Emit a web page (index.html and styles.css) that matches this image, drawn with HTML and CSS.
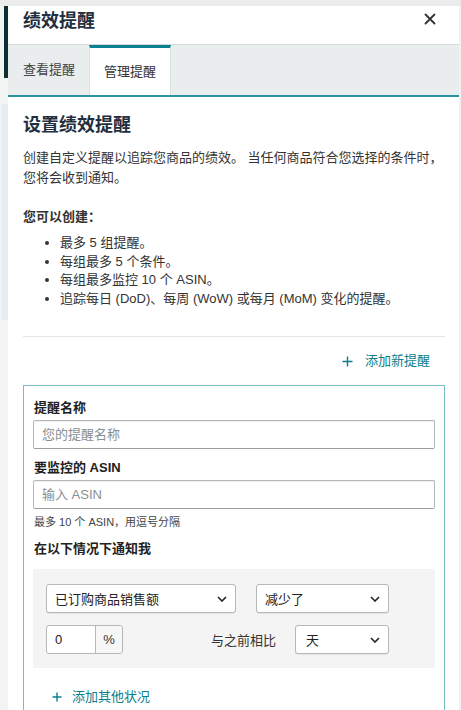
FILE: index.html
```html
<!DOCTYPE html>
<html lang="zh-CN">
<head>
<meta charset="utf-8">
<title>绩效提醒</title>
<link rel="stylesheet" href="styles.css">
</head>
<body>
<div class="page-edge">
  <div class="edge-dark"></div>
  <div class="edge-gap"></div>
  <div class="edge-blue"></div>
  <div class="edge-rest"></div>
</div>
<div class="panel">
  <div class="panel-header">
    <h1 class="panel-title">绩效提醒</h1>
    <svg class="close-icon" width="12" height="12" viewBox="0 0 12 12"><path d="M1.5 1.5 L10.5 10.5 M10.5 1.5 L1.5 10.5" stroke="#333" stroke-width="1.8" stroke-linecap="round" fill="none"/></svg>
  </div>
  <div class="tabs">
    <div class="tab">查看提醒</div>
    <div class="tab tab-active">管理提醒</div>
  </div>
  <div class="content">
    <h2 class="section-title">设置绩效提醒</h2>
    <p class="intro">创建自定义提醒以追踪您商品的绩效。 当任何商品符合您选择的条件时，您将会收到通知。</p>
    <div class="can-title">您可以创建：</div>
    <ul class="can-list">
      <li>最多 5 组提醒。</li>
      <li>每组最多 5 个条件。</li>
      <li>每组最多监控 10 个 ASIN。</li>
      <li>追踪每日 (DoD)、每周 (WoW) 或每月 (MoM) 变化的提醒。</li>
    </ul>
    <div class="divider"></div>
    <div class="add-row">
      <span class="link"><svg class="plus" width="11" height="11" viewBox="0 0 11 11"><path d="M5.5 0.5 V10.5 M0.5 5.5 H10.5" stroke="#0a7f8e" stroke-width="1.4" fill="none"/></svg>添加新提醒</span>
    </div>
    <div class="form-box">
      <div class="label">提醒名称</div>
      <div class="input placeholder">您的提醒名称</div>
      <div class="label label-gap">要监控的 ASIN</div>
      <div class="input placeholder">输入 ASIN</div>
      <div class="helper">最多 10 个 ASIN，用逗号分隔</div>
      <div class="label label-gap">在以下情况下通知我</div>
      <div class="cond-box">
        <div class="cond-row">
          <div class="select sel-metric"><span>已订购商品销售额</span><svg width="10" height="6" viewBox="0 0 10 6"><path d="M1 1 L5 5 L9 1" stroke="#222" stroke-width="1.6" fill="none"/></svg></div>
          <div class="select sel-change"><span>减少了</span><svg width="10" height="6" viewBox="0 0 10 6"><path d="M1 1 L5 5 L9 1" stroke="#222" stroke-width="1.6" fill="none"/></svg></div>
        </div>
        <div class="cond-row row-two">
          <div class="pct-group">
            <div class="pct-input">0</div>
            <div class="pct-addon">%</div>
          </div>
          <span class="compare">与之前相比</span>
          <div class="select sel-period"><span>天</span><svg width="10" height="6" viewBox="0 0 10 6"><path d="M1 1 L5 5 L9 1" stroke="#222" stroke-width="1.6" fill="none"/></svg></div>
        </div>
      </div>
      <div class="add-cond">
        <span class="link link-tight"><svg class="plus" width="10" height="10" viewBox="0 0 10 10"><path d="M5 0.5 V9.5 M0.5 5 H9.5" stroke="#0a7f8e" stroke-width="1.4" fill="none"/></svg>添加其他状况</span>
      </div>
    </div>
  </div>
</div>
<div class="page-edge-right"></div>
</body>
</html>
```

FILE: styles.css
```css
html, body {
  height: 100%;
}
body {
  margin: 0;
  padding-top: 6px;
  box-sizing: border-box;
  display: flex;
  align-items: stretch;
  background: #ececec;
  font-family: "Liberation Sans", "Noto Sans CJK SC", sans-serif;
  color: #2b2b2b;
  overflow: hidden;
}
.page-edge {
  width: 8px;
  flex: none;
  display: flex;
  flex-direction: column;
  background: #f3f4f4;
}
.page-edge > div {
  flex: none;
}
.edge-dark {
  height: 72px;
  margin-left: 4px;
  background: #0e2e33;
}
.edge-gap {
  height: 26px;
}
.edge-blue {
  height: 216px;
  margin-left: 2px;
  background: #e4edf2;
}
.page-edge > .edge-rest {
  flex: 1;
}
.panel {
  width: 451px;
  flex: none;
  background: #fff;
  display: flex;
  flex-direction: column;
  overflow: hidden;
}
.panel > div {
  flex: none;
}
.page-edge-right {
  flex: 1;
  background: #f1f1f1;
}
.panel-header {
  height: 38px;
  border-bottom: 1px solid #d5d9d9;
  display: flex;
  align-items: center;
  justify-content: space-between;
  padding: 0 23px 0 15px;
}
.panel-title {
  margin: 0;
  font-size: 18px;
  font-weight: 700;
  line-height: 24px;
  color: #232f3e;
  position: relative;
  top: -4px;
}
.close-icon {
  position: relative;
  top: -6px;
}
.tabs {
  height: 50px;
  background: #eaeded;
  display: flex;
  border-bottom: 2px solid #2a93a0;
}
.tab {
  padding: 0 15px;
  font-size: 13px;
  line-height: 50px;
  color: #444;
}
.tab-active {
  background: #fff;
  color: #333;
  border-top: 3px solid #0a8090;
  line-height: 47px;
  padding: 0 14px;
  margin-left: -1px;
  border-left: 1px solid #dcdfdf;
  border-right: 1px solid #dcdfdf;
}
.content {
  padding: 16px 14px 0 15px;
}
.section-title {
  margin: 0;
  font-size: 18px;
  line-height: 24px;
  font-weight: 700;
  color: #232f3e;
}
.intro {
  margin: 11px 0 0;
  font-size: 13px;
  line-height: 20px;
  color: #333;
}
.can-title {
  margin-top: 19px;
  font-size: 13px;
  line-height: 20px;
  font-weight: 700;
  color: #333;
}
.can-list {
  margin: 7px 0 0;
  padding-left: 37px;
  font-size: 13px;
  line-height: 18.5px;
  color: #333;
}
.divider {
  margin-top: 28px;
  height: 1px;
  background: #e3e6e6;
}
.add-row {
  margin-top: 14px;
  display: flex;
  justify-content: flex-end;
  padding-right: 15px;
}
.link {
  display: inline-flex;
  align-items: center;
  gap: 12px;
  font-size: 13px;
  line-height: 20px;
  color: #0a7f8e;
}
.link-tight {
  gap: 10px;
}
.form-box {
  margin-top: 14px;
  border: 1px solid #78bcc4;
  border-bottom: none;
  padding: 12px 9px 0 9px;
  height: 400px;
}
.label {
  font-size: 13px;
  line-height: 20px;
  font-weight: 700;
  color: #222;
  padding-left: 1px;
}
.label-gap {
  margin-top: 9px;
}
.input {
  margin-top: 2px;
  height: 27px;
  border: 1px solid #b4b8b8;
  border-bottom-color: #9aa0a0;
  border-radius: 2px;
  box-shadow: inset 0 1px 0 #f0f2f2;
  padding-left: 8px;
  font-size: 13px;
  line-height: 27px;
}
.placeholder {
  color: #8a8f8f;
}
.helper {
  margin-top: 5px;
  font-size: 11px;
  line-height: 16px;
  color: #444;
  padding-left: 1px;
}
.cond-box {
  margin-top: 10px;
  background: #f4f4f4;
  padding: 15px 46px 14px 13px;
  display: flex;
  flex-direction: column;
  gap: 12px;
}
.cond-row {
  display: flex;
  align-items: center;
  justify-content: space-between;
}
.select {
  box-sizing: border-box;
  height: 29px;
  background: #fff;
  border: 1px solid #b4b8b8;
  border-radius: 3px;
  box-shadow: 0 1px 0 rgba(0,0,0,0.06);
  display: flex;
  align-items: center;
  justify-content: space-between;
  padding: 0 8px 0 8px;
  font-size: 13px;
  color: #222;
}
.sel-metric {
  width: 190px;
}
.sel-change {
  width: 133px;
}
.sel-period {
  width: 94px;
  margin-left: 19px;
  padding-left: 10px;
}
.row-two {
  justify-content: flex-start;
}
.pct-group {
  display: flex;
  height: 29px;
  box-sizing: border-box;
  border: 1px solid #b4b8b8;
  border-radius: 3px;
  background: #fff;
}
.pct-input {
  width: 40px;
  padding-left: 8px;
  font-size: 13px;
  line-height: 27px;
  color: #222;
  border-right: 1px solid #b4b8b8;
}
.pct-addon {
  width: 26px;
  text-align: center;
  font-size: 13px;
  line-height: 27px;
  color: #333;
  background: #f7f7f7;
  border-radius: 0 3px 3px 0;
}
.compare {
  margin-left: auto;
  font-size: 13px;
  color: #333;
}
.add-cond {
  margin-top: 19px;
  padding-left: 19px;
}
```
